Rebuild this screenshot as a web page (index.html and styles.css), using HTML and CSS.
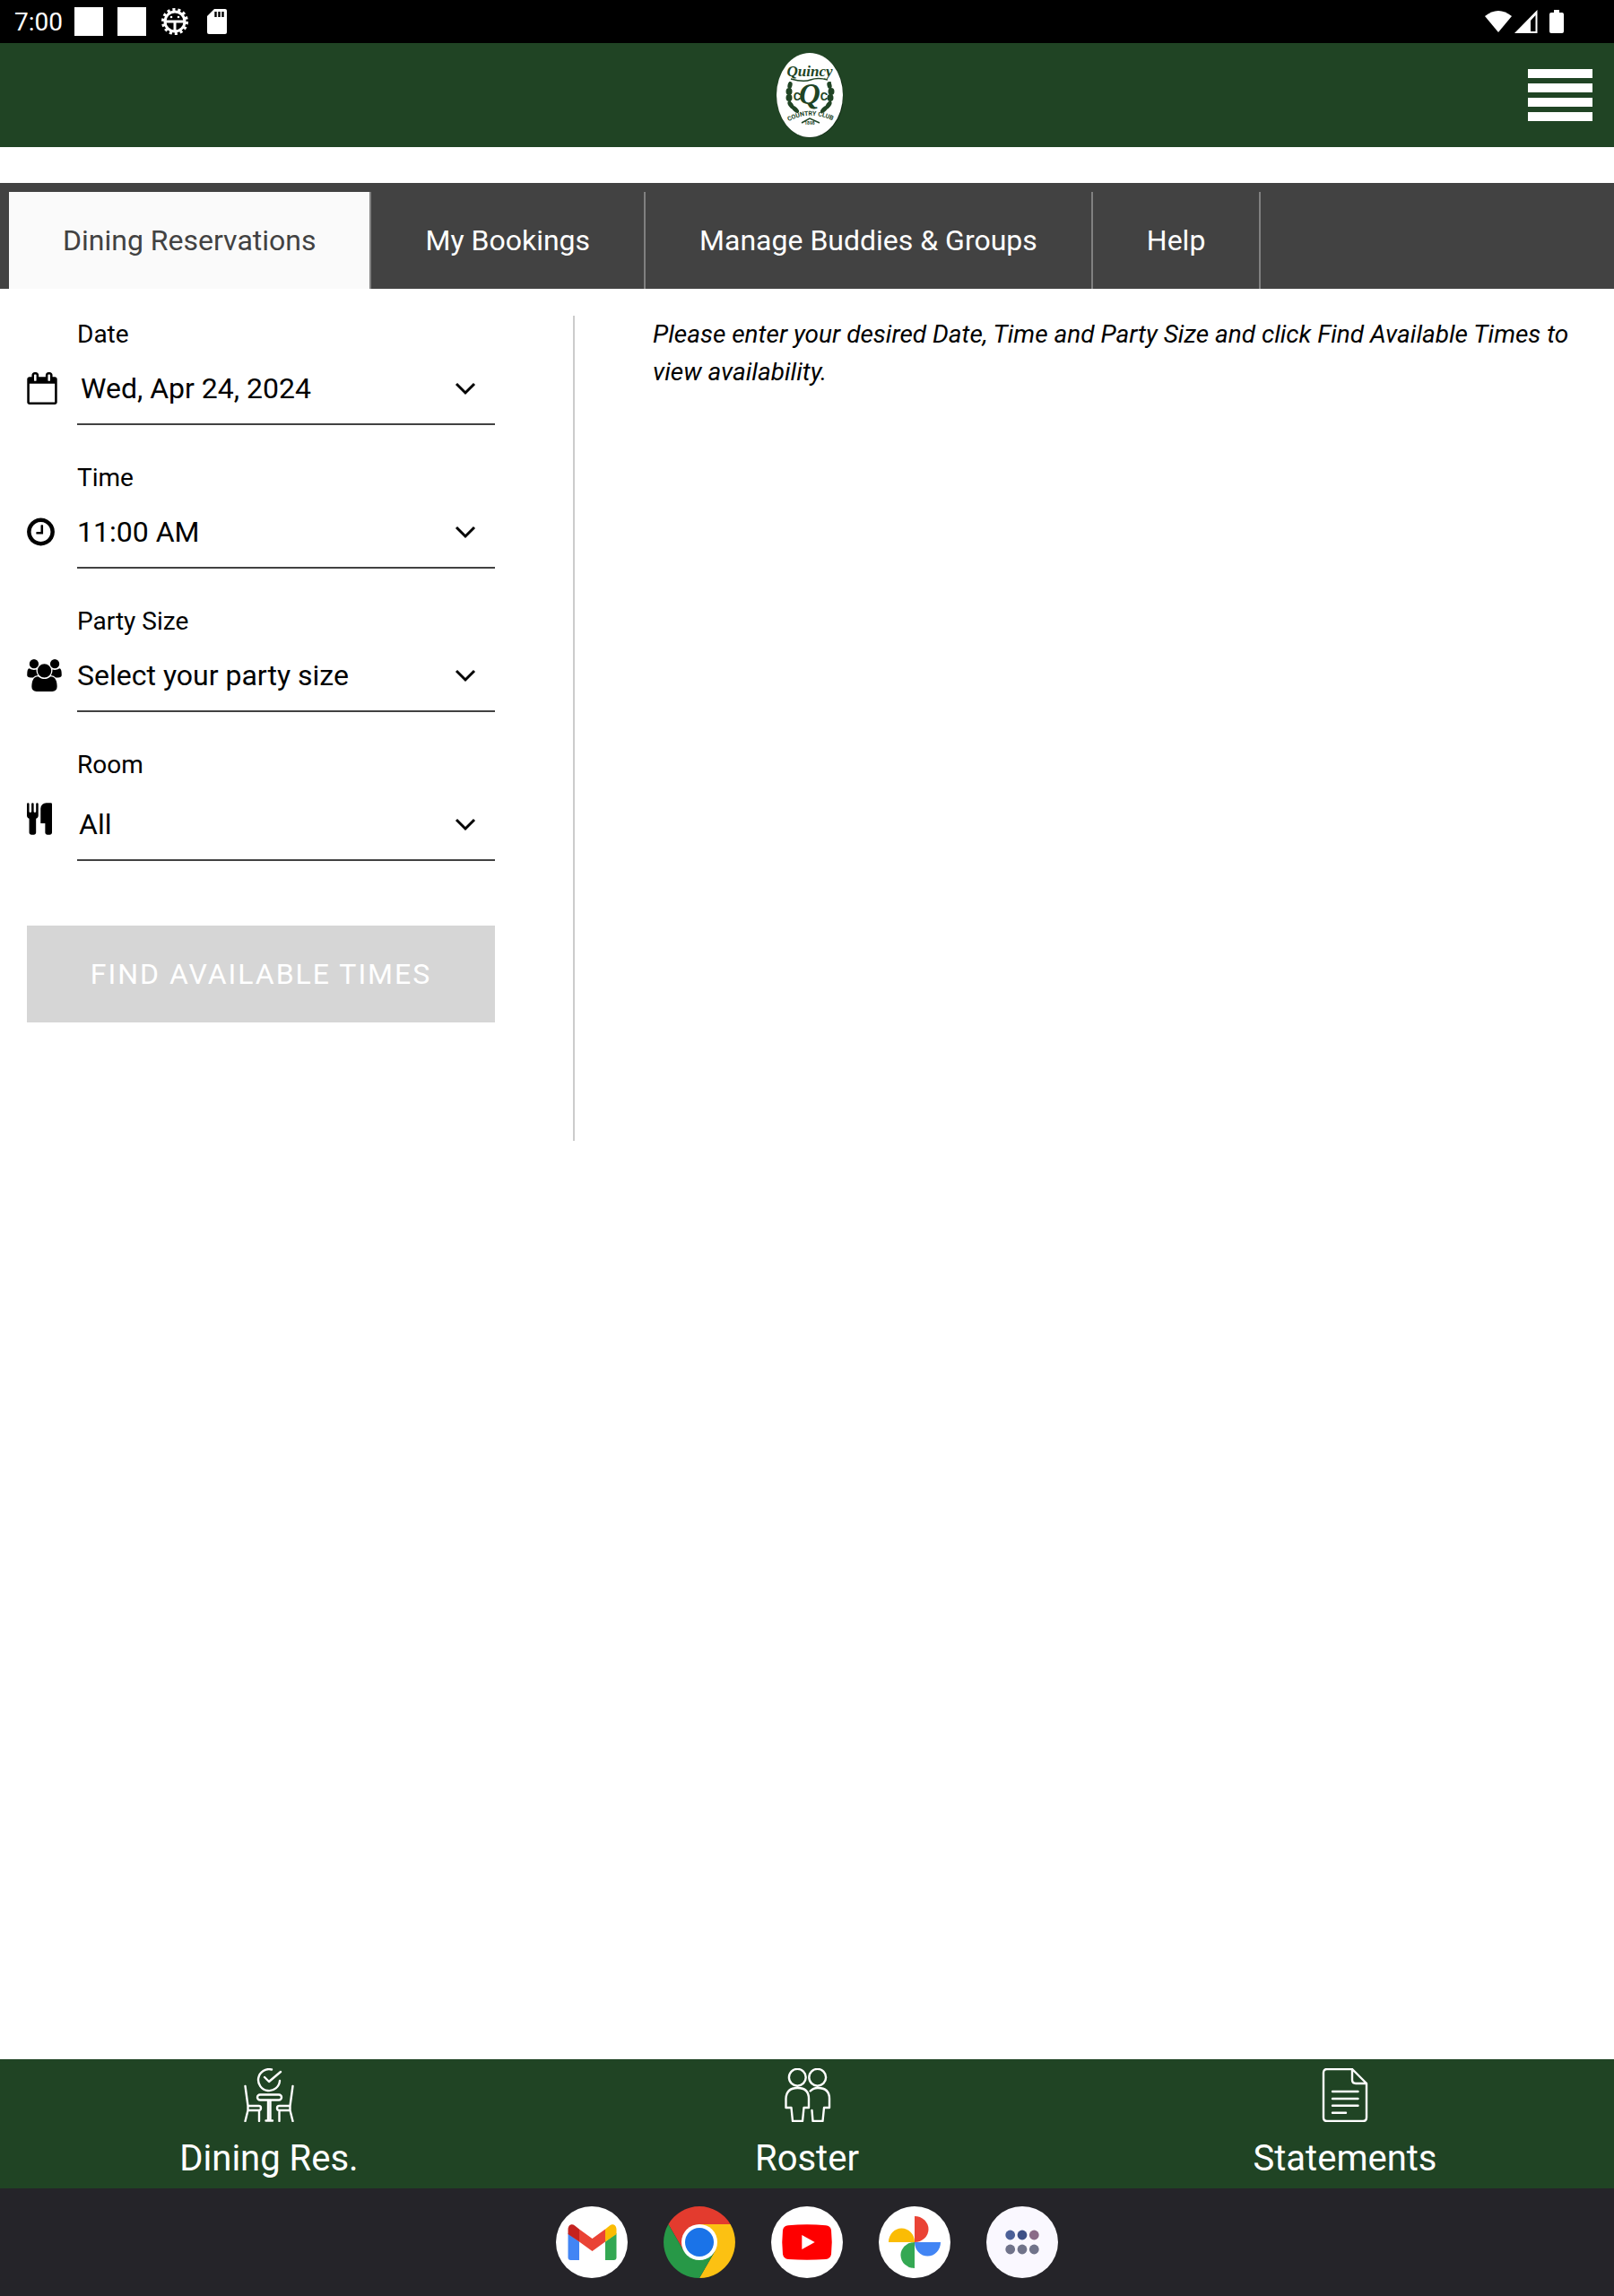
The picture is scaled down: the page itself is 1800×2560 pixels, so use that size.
FILE: index.html
```html
<!DOCTYPE html>
<html lang="en">
<head>
    <meta charset="utf-8">
    <title>Dining Reservations - Quincy Country Club</title>
    <link rel="stylesheet" href="styles.css">
</head>
<body>

    <div id="status-bar">
        <span class="clock">7:00</span>
        <span class="notice"></span>
        <span class="notice"></span>
        <svg class="gear" width="32" height="32" viewBox="0 0 32 32">
            <circle cx="16" cy="16" r="13" fill="none" stroke="#fff" stroke-width="4" stroke-dasharray="3 2.83"/>
            <circle cx="16" cy="16" r="11" fill="none" stroke="#fff" stroke-width="3"/>
            <path d="M6 16h20M16 16v10" stroke="#fff" stroke-width="3"/>
            <circle cx="12" cy="11" r="1.3" fill="#fff"/>
            <circle cx="20" cy="11" r="1.3" fill="#fff"/>
        </svg>
        <svg width="22" height="28" viewBox="0 0 22 28">
            <path d="M8 0h12q2 0 2 2v24q0 2-2 2H2q-2 0-2-2V8z" fill="#fff"/>
            <path d="M9.500 3v6M13.500 3v6M17.500 3v6" stroke="#000" stroke-width="2.400"/>
        </svg>
        <div class="signals">
            <svg width="30" height="26" viewBox="0 0 30 26"><path d="M15 25L0 7Q15-5 30 7z" fill="#fff"/></svg>
            <svg width="26" height="26" viewBox="0 0 26 26"><path d="M25.500 0v26H0zM23.500 6l-5.500 6v12h5.500z" fill="#fff" fill-rule="evenodd"/></svg>
            <svg class="battery" width="16" height="26" viewBox="0 0 16 26"><path d="M5 0h6v3h3q2 0 2 2v19q0 2-2 2H2q-2 0-2-2V5q0-2 2-2h3z" fill="#fff"/></svg>
        </div>
    </div>

    <header>
        <a class="logo" href="#" aria-label="Quincy Country Club">
            <svg width="80" height="96" viewBox="0 0 80 96">
                <ellipse cx="43.500" cy="48.500" rx="37.500" ry="47" fill="#142d17"/>
                <ellipse cx="43" cy="48" rx="37" ry="47" fill="#fff"/>
                <g fill="#204424">
                    <text class="script" x="43" y="27" font-size="17" text-anchor="middle">Quincy</text>
                    <text class="script" x="43" y="58" font-size="33" text-anchor="middle">Q</text>
                    <text class="letters" x="29" y="54" font-size="13" text-anchor="middle">C</text>
                    <text class="letters" x="59" y="54" font-size="13" text-anchor="middle">C</text>
                    <ellipse cx="21" cy="37" rx="2.500" ry="4" transform="rotate(15 21 37)"/>
                    <ellipse cx="20" cy="44" rx="3.500" ry="4"/>
                    <ellipse cx="20" cy="51" rx="3.500" ry="4"/>
                    <ellipse cx="22" cy="59" rx="2.500" ry="5" transform="rotate(-35 22 59)"/>
                    <ellipse cx="27" cy="64" rx="2.500" ry="5" transform="rotate(-45 27 64)"/>
                    <ellipse cx="65" cy="37" rx="2.500" ry="4" transform="rotate(-15 65 37)"/>
                    <ellipse cx="67" cy="44" rx="3.500" ry="4"/>
                    <ellipse cx="66" cy="51" rx="3.500" ry="4"/>
                    <ellipse cx="64" cy="59" rx="2.500" ry="5" transform="rotate(35 64 59)"/>
                    <ellipse cx="59" cy="64" rx="2.500" ry="5" transform="rotate(45 59 64)"/>
                    <path id="ribbon" d="M18 78Q43 64 70 77" fill="none"/>
                    <text class="letters" font-size="7"><textPath href="#ribbon" startOffset="50%" text-anchor="middle">COUNTRY CLUB</textPath></text>
                    <text class="letters" x="43" y="81" font-size="5" text-anchor="middle">1898</text>
                </g>
                <path d="M22 30q14 4 22 1t19 0M21 33v25M66 33v25M34 79l9-5 11 5" fill="none" stroke="#204424" stroke-width="1.500"/>
            </svg>
        </a>
        <button class="menu" type="button" aria-label="Menu">
            <span></span><span></span><span></span><span></span>
        </button>
    </header>

    <nav class="tabs">
        <a class="active" href="#">Dining Reservations</a>
        <a href="#">My Bookings</a>
        <a href="#">Manage Buddies &amp; Groups</a>
        <a href="#">Help</a>
    </nav>

    <main>
        <form class="search">
            <div class="field date">
                <label for="date">Date</label>
                <svg class="icon" width="34" height="36" viewBox="64 0 1664 1792"><path d="M192 1664h1408v-1024h-1408v1024zM576 448v-288q0-14-9-23t-23-9h-64q-14 0-23 9t-9 23v288q0 14 9 23t23 9h64q14 0 23-9t9-23zM1344 448v-288q0-14-9-23t-23-9h-64q-14 0-23 9t-9 23v288q0 14 9 23t23 9h64q14 0 23-9t9-23zM1728 384v1280q0 52-38 90t-90 38h-1408q-52 0-90-38t-38-90v-1280q0-52 38-90t90-38h128v-96q0-66 47-113t113-47h64q66 0 113 47t47 113v96h384v-96q0-66 47-113t113-47h64q66 0 113 47t47 113v96h128q52 0 90 38t38 90z"/></svg>
                <div class="control">
                    <select id="date"><option>Wed, Apr 24, 2024</option></select>
                    <svg class="chevron" width="24" height="16" viewBox="0 0 24 16"><path d="M2 2l10 10L22 2"/></svg>
                </div>
            </div>
            <div class="field">
                <label for="time">Time</label>
                <svg class="icon" width="31" height="36" viewBox="128 0 1536 1792"><path d="M1024 544v448q0 14-9 23t-23 9h-320q-14 0-23-9t-9-23v-64q0-14 9-23t23-9h224v-352q0-14 9-23t23-9h64q14 0 23 9t9 23zm416 352q0-148-73-273t-198-198-273-73-273 73-198 198-73 273 73 273 198 198 273 73 273-73 198-198 73-273zm224 0q0 209-103 385.500t-279.500 279.500-385.500 103-385.500-103-279.500-279.500-103-385.500 103-385.500 279.500-279.500 385.500-103 385.500 103 279.500 279.500 103 385.500z"/></svg>
                <div class="control">
                    <select id="time"><option>11:00 AM</option></select>
                    <svg class="chevron" width="24" height="16" viewBox="0 0 24 16"><path d="M2 2l10 10L22 2"/></svg>
                </div>
            </div>
            <div class="field">
                <label for="party">Party Size</label>
                <svg class="icon" width="39" height="36" viewBox="0 0 1920 1792"><path d="M593 896q-162 5-265 128h-134q-82 0-138-40.500t-56-118.500q0-353 124-353 6 0 43.500 21t97.500 42.500 119 21.500q67 0 133-23-5 37-5 66 0 139 81 256zm1071 637q0 120-73 189.500t-194 69.500h-874q-121 0-194-69.500t-73-189.500q0-53 3.500-103.500t14-109 26.500-108.500 43-97.500 62-81 85.500-53.500 111.500-20q10 0 43 21.500t73 48 107 48 135 21.500 135-21.500 107-48 73-48 43-21.500q61 0 111.500 20t85.500 53.500 62 81 43 97.500 26.500 108.500 14 109 3.500 103.500zm-1024-1277q0 106-75 181t-181 75-181-75-75-181 75-181 181-75 181 75 75 181zm704 384q0 159-112.500 271.500t-271.500 112.500-271.500-112.500-112.500-271.500 112.500-271.500 271.500-112.500 271.500 112.500 112.500 271.500zm576 225q0 78-56 118.500t-138 40.500h-134q-103-123-265-128 81-117 81-256 0-29-5-66 66 23 133 23 59 0 119-21.500t97.500-42.500 43.500-21q124 0 124 353zm-128-609q0 106-75 181t-181 75-181-75-75-181 75-181 181-75 181 75 75 181z"/></svg>
                <div class="control">
                    <select id="party"><option>Select your party size</option></select>
                    <svg class="chevron" width="24" height="16" viewBox="0 0 24 16"><path d="M2 2l10 10L22 2"/></svg>
                </div>
            </div>
            <div class="field room">
                <label for="room">Room</label>
                <svg class="icon" width="28" height="36" viewBox="192 0 1408 1792"><path d="M832 64v640q0 61-35.500 111t-92.500 70v779q0 52-38 90t-90 38h-128q-52 0-90-38t-38-90v-779q-57-20-92.500-70t-35.500-111v-640q0-26 19-45t45-19 45 19 19 45v416q0 26 19 45t45 19 45-19 19-45v-416q0-26 19-45t45-19 45 19 19 45v416q0 26 19 45t45 19 45-19 19-45v-416q0-26 19-45t45-19 45 19 19 45zm768 0v1600q0 52-38 90t-90 38h-128q-52 0-90-38t-38-90v-512h-224q-13 0-22.500-9.500t-9.500-22.500v-800q0-132 94-226t226-94h256q26 0 45 19t19 45z"/></svg>
                <div class="control">
                    <select id="room"><option>All</option></select>
                    <svg class="chevron" width="24" height="16" viewBox="0 0 24 16"><path d="M2 2l10 10L22 2"/></svg>
                </div>
            </div>
            <button class="find" type="submit" disabled>FIND AVAILABLE TIMES</button>
        </form>

        <section class="results">
            <p>Please enter your desired Date, Time and Party Size and click Find Available Times to view availability.</p>
        </section>
    </main>

    <nav class="bottom-nav">
        <a href="#">
            <svg width="60" height="60" viewBox="0 0 60 60">
                <path d="M33 1.500A12 12 0 1 0 42 14M25 10l5 5L43 4"/>
                <rect x="17" y="29.500" width="27" height="6" rx="3"/>
                <path d="M29 36v22M31.500 36v22M26.500 58.500h7.500"/>
                <path d="M3.500 20l3 22v5l-3 12M6.500 42H18.500q2.500 0 2.500 2.500T18.500 47H6.500M19 47v12"/>
                <path d="M56.500 20l-3 22v5l3 12M53.500 42H41.500q-2.500 0-2.500 2.500t2.500 2.500H53.500M41.500 47v12"/>
            </svg>
            <span>Dining Res.</span>
        </a>
        <a href="#">
            <svg width="60" height="60" viewBox="0 0 60 60">
                <circle cx="19.300" cy="10.300" r="9.400"/>
                <circle cx="41.700" cy="10.300" r="9.400"/>
                <path d="M6.500 44V34Q7 22 19.500 22T32 34V44H26.500L25 59H14L12.500 44z"/>
                <path d="M33.700 25.500Q37 22 42 22 55 22 55 34V44H49L47.500 59H36.500L35.500 47"/>
            </svg>
            <span>Roster</span>
        </a>
        <a href="#">
            <svg width="60" height="60" viewBox="0 0 60 60">
                <path d="M38 1H10Q6 1 6 5V55Q6 59 10 59H50Q54 59 54 55V17zM38 1V13Q38 17 42 17H54"/>
                <path d="M16 26H44.500M16 34H44.500M16 41.700H44.500M16 49.700H31"/>
            </svg>
            <span>Statements</span>
        </a>
    </nav>

    <div id="dock">
        <!-- Gmail -->
        <svg width="80" height="80" viewBox="0 0 80 80">
            <circle cx="40" cy="40" r="40" fill="#fff"/>
            <path d="M13.500 30L26 39.500V60H16.500Q13.500 60 13.500 57z" fill="#4285f4"/>
            <path d="M67.500 30L55 39.500V60H64.500Q67.500 60 67.500 57z" fill="#34a853"/>
            <path d="M26 25.500L40.500 36 55 25.500V39.500L40.500 50 26 39.500z" fill="#ea4335"/>
            <path d="M26 25.500L21 21.500C17.500 18.500 13.500 21 13.500 25.500V31L26 39.500z" fill="#c5221f"/>
            <path d="M55 25.500L60 21.500C63.500 18.500 67.500 21 67.500 25.500V31L55 39.500z" fill="#fbbc04"/>
        </svg>
        <!-- Chrome -->
        <svg width="80" height="80" viewBox="0 0 80 80">
            <path d="M5.400 20A40 40 0 0 1 74.600 20H40L22.700 50z" fill="#e33b2e"/>
            <path d="M74.600 20A40 40 0 0 1 40 80L57.300 50 40 20z" fill="#fcc112"/>
            <path d="M5.400 20A40 40 0 0 0 40 80L57.300 50H22.700z" fill="#279847"/>
            <circle cx="40" cy="40" r="20" fill="#fff"/>
            <circle cx="40" cy="40" r="16" fill="#1a73e8"/>
        </svg>
        <!-- YouTube -->
        <svg width="80" height="80" viewBox="0 0 80 80">
            <circle cx="40" cy="40" r="40" fill="#fff"/>
            <path d="M19 21.200Q40 19.500 61 21.200 66 21.500 67 26.500 68.500 40 67 53.500 66 58.500 61 58.900 40 60.500 19 58.900 14 58.500 13 53.500 11.500 40 13 26.500 14 21.500 19 21.200z" fill="#f00"/>
            <path d="M34.300 32L48.700 40 34.300 48z" fill="#fff"/>
        </svg>
        <!-- Photos -->
        <svg width="80" height="80" viewBox="0 0 80 80">
            <circle cx="40" cy="40" r="40" fill="#fff"/>
            <path d="M40 11A15.500 14.500 0 0 1 40 40z" fill="#ea4335"/>
            <path d="M69 40A14.500 15.500 0 0 1 40 40z" fill="#4285f4"/>
            <path d="M40 69A15.500 14.500 0 0 1 40 40z" fill="#34a853"/>
            <path d="M11 40A14.500 15.500 0 0 1 40 40z" fill="#fbbc04"/>
        </svg>
        <!-- All apps -->
        <svg width="80" height="80" viewBox="0 0 80 80">
            <circle cx="40" cy="40" r="40" fill="#faf8ff"/>
            <circle cx="26.700" cy="32" r="5.400" fill="#4c6098"/>
            <circle cx="40" cy="32" r="5.400" fill="#3e5086"/>
            <circle cx="53.300" cy="32" r="5.400" fill="#8a6b88"/>
            <circle cx="26.700" cy="48" r="5.400" fill="#70738a"/>
            <circle cx="40" cy="48" r="5.400" fill="#70738a"/>
            <circle cx="53.300" cy="48" r="5.400" fill="#70738a"/>
        </svg>
    </div>

</body>
</html>
```
FILE: styles.css
```css
* {
    box-sizing: border-box;
}
body {
    margin: 0;
    min-height: 100vh;
    display: flex;
    flex-direction: column;
    background: #fff;
    color: #000;
    font: 32px/42px Roboto, "Liberation Sans", sans-serif;
}
a {
    color: inherit;
    text-decoration: none;
}
svg {
    display: block;
    flex: none;
}

/* device status bar */
#status-bar {
    display: flex;
    align-items: center;
    gap: 16px;
    height: 48px;
    padding: 0 56px 0 16px;
    background: #000;
    color: #fff;
    font-size: 28px;
}
.clock {
    width: 51px;
    padding-top: 2px;
    white-space: nowrap;
}
.notice {
    width: 32px;
    height: 32px;
    background: #fff;
}
.gear {
    margin-right: 4px;
}
.signals {
    display: flex;
    gap: 3px;
    margin-left: auto;
}
.battery {
    margin-left: 10px;
}

header {
    display: grid;
    grid-template-columns: 1fr auto 1fr;
    align-items: center;
    height: 116px;
    padding: 0 24px;
    background: #204424;
}
.logo {
    grid-column: 2;
}
.script {
    font-family: "Liberation Serif", serif;
    font-style: italic;
    font-weight: bold;
}
.letters {
    font-family: Roboto, sans-serif;
    font-weight: bold;
}
.menu {
    justify-self: end;
    display: grid;
    gap: 6px;
    width: 72px;
    padding: 0;
    border: 0;
    background: none;
}
.menu span {
    height: 10px;
    background: #fff;
}

.tabs {
    display: flex;
    margin-top: 40px;
    padding: 10px 10px 0;
    background: #424242;
    color: #fff;
}
.tabs a {
    padding: 33px 60px;
    border-right: 2px solid #808080;
}
.tabs .active {
    background: #fafafa;
    color: #424242;
}

main {
    display: flex;
    padding: 30px;
}
.search {
    width: 35%;
    padding: 0 5% 132px 0;
}
.field {
    display: grid;
    grid-template-columns: 56px 1fr;
    margin-bottom: 38px;
}
.field label {
    grid-column: 2;
    font-size: 28px;
}
.icon {
    margin-top: 21px;
}
.control {
    position: relative;
    border-bottom: 2px solid #424242;
}
.control select {
    display: block;
    appearance: none;
    width: 100%;
    height: 78px;
    padding: 0;
    border: 0;
    background: none;
    color: #000;
    font: inherit;
}
.date select {
    padding-left: 4px;
}
.room select {
    padding-left: 2px;
}
.room .control {
    margin-top: 6px;
}
.chevron {
    position: absolute;
    right: 21px;
    top: 32px;
    pointer-events: none;
}
.chevron path {
    fill: none;
    stroke: #000;
    stroke-width: 3;
}
.find {
    width: 100%;
    height: 108px;
    margin-top: 34px;
    border: 0;
    background: #d6d6d6;
    color: #fff;
    font: inherit;
    letter-spacing: 2px;
}
.results {
    flex: 1;
    padding-left: 5%;
    border-left: 2px solid #ccc;
    font-size: 28px;
    font-style: italic;
}
.results p {
    margin: 0;
}

.bottom-nav {
    display: grid;
    grid-template-columns: repeat(3, 1fr);
    margin-top: auto;
    background: #204424;
    color: #fff;
    font-size: 40px;
    line-height: 66px;
}
.bottom-nav a {
    display: flex;
    flex-direction: column;
    align-items: center;
    gap: 8px;
    padding-top: 10px;
}
.bottom-nav svg {
    fill: none;
    stroke: #fff;
    stroke-width: 2.4;
    stroke-linecap: round;
    stroke-linejoin: round;
}

#dock {
    display: flex;
    justify-content: center;
    gap: 40px;
    padding: 20px;
    background: #252429;
}
```
